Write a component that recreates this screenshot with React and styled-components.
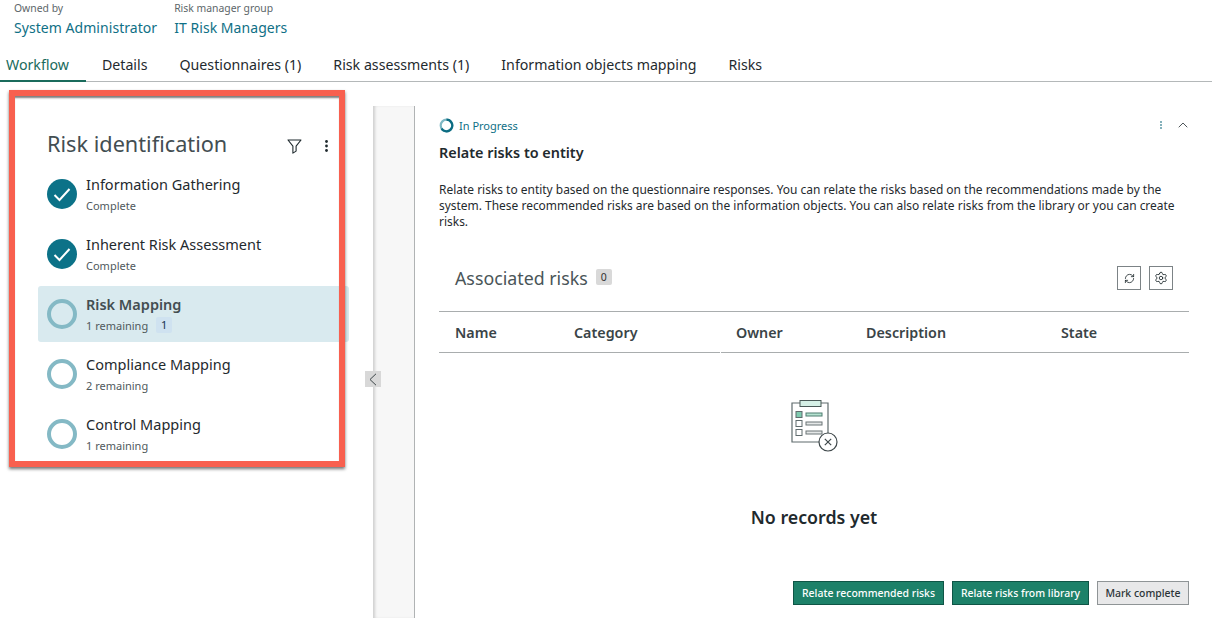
import React from 'react';
import styled, { createGlobalStyle } from 'styled-components';
import { RefreshCw, Settings, ChevronUp } from 'lucide-react';

const GlobalStyle = createGlobalStyle`
  html, body {
    margin: 0;
    height: 100%;
    background: #fff;
    overflow: hidden;
  }
  body {
    font-family: 'Noto Sans', 'Open Sans', sans-serif;
    color: #1f2a2e;
  }
  * { box-sizing: border-box; }
`;

const Page = styled.div`
  width: 1212px;
  height: 618px;
  display: flex;
  flex-direction: column;
`;

const Meta = styled.div`
  height: 50px;
  padding-left: 14px;
  display: flex;
  gap: 17px;
`;

const MetaItem = styled.div`
  display: flex;
  flex-direction: column;
`;

const MetaLabel = styled.span`
  font-size: 10.4px;
  line-height: 16px;
  color: #5c6669;
`;

const MetaValue = styled.span`
  font-size: 14px;
  line-height: 24px;
  letter-spacing: 0.05px;
  color: #0f7086;
`;

const Tabs = styled.div`
  height: 32px;
  display: flex;
  border-bottom: 1px solid #b4b8b9;
`;

const Tab = styled.div`
  height: 32px;
  padding: 0 16px;
  font-size: 14.2px;
  line-height: 29px;
  color: ${p => (p.$active ? '#1a6b5c' : '#1f2a2e')};
  border-bottom: 2px solid ${p => (p.$active ? '#1a6b5c' : 'transparent')};
  &:first-child { padding: 0 17px 0 6px; }
`;

const Body = styled.div`
  flex: 1;
  min-height: 0;
  display: grid;
  grid-template-columns: 373px 42px 1fr;
`;

const SidePanel = styled.section`
  position: relative;
  padding: 48px 24px 0 38px;
`;

const Callout = styled.div`
  position: absolute;
  left: 9px;
  top: 8px;
  width: 336px;
  height: 377px;
  border: 6px solid #f8604f;
  box-shadow: 0 2px 3px rgba(40, 40, 40, 0.65), inset 0 3px 2px -1px rgba(40, 40, 40, 0.6);
  pointer-events: none;
`;

const PanelHead = styled.div`
  height: 28px;
  margin-bottom: 8px;
  padding: 0 21px 0 9px;
  display: flex;
  align-items: center;
`;

const PanelTitle = styled.h2`
  margin: 0;
  flex: 1;
  font-size: 21.7px;
  line-height: 28px;
  font-weight: 400;
  color: #434e52;
`;

const PanelTools = styled.div`
  margin-top: 4px;
  display: flex;
  align-items: center;
  gap: 23px;
  color: #1f2a2e;
`;

const StepList = styled.div`
  display: flex;
  flex-direction: column;
  gap: 4px;
`;

const Step = styled.div`
  height: 56px;
  padding-left: 9px;
  display: flex;
  align-items: center;
  gap: 9px;
  border-radius: 3px;
  background: ${p => (p.$active ? '#d9eaef' : 'transparent')};
`;

const DoneMark = styled.span`
  width: 30px;
  height: 30px;
  flex: none;
  border-radius: 50%;
  background: #0c7288;
  display: flex;
  align-items: center;
  justify-content: center;
`;

const OpenMark = styled.span`
  width: 30px;
  height: 30px;
  flex: none;
  border-radius: 50%;
  border: 4px solid #84b9c5;
`;

const StepText = styled.div`
  display: flex;
  flex-direction: column;
`;

const StepName = styled.span`
  font-size: 14.5px;
  line-height: 22px;
  font-weight: ${p => (p.$active ? 600 : 400)};
  color: ${p => (p.$active ? '#434e52' : '#1f2a2e')};
`;

const StepSub = styled.span`
  display: flex;
  align-items: center;
  gap: 8px;
  height: 20px;
  font-size: 11px;
  color: #50595c;
`;

const Count = styled.span`
  min-width: 16px;
  height: 16px;
  background: #cfe2f0;
  border-radius: 2px;
  text-align: center;
  font-size: 11px;
  line-height: 16px;
  color: #16324f;
`;

const Gutter = styled.div`
  position: relative;
  margin-top: 24px;
  background: #f7f7f7;
  border-right: 1px solid #b0b3b4;
  box-shadow: inset 3px 0 3px -1px rgba(0, 0, 0, 0.16);
`;

const CollapseButton = styled.span`
  position: absolute;
  left: -8px;
  top: 265px;
  width: 16px;
  height: 16px;
  background: #d8d8d8;
  display: flex;
  align-items: center;
  justify-content: center;
`;

const Detail = styled.main`
  padding: 36px 23px 13px 24px;
  display: flex;
  flex-direction: column;
  min-width: 0;
`;

const StatusRow = styled.div`
  height: 14px;
  display: flex;
  align-items: center;
  gap: 5px;
  font-size: 11px;
  color: #0f7086;
`;

const StatusText = styled.span`
  flex: 1;
`;

const StatusTools = styled.div`
  margin-right: -2px;
  display: flex;
  align-items: center;
  gap: 13px;
  color: #1f2a2e;
`;

const DetailTitle = styled.h3`
  margin: 11px 0 0;
  font-size: 14.4px;
  line-height: 20px;
  font-weight: 600;
  color: #1f2a2e;
`;

const Description = styled.p`
  margin: 19px 0 0;
  font-size: 11.96px;
  line-height: 16px;
  color: #1f2a2e;
`;

const SectionHead = styled.div`
  margin-top: 36px;
  padding: 0 16px;
  height: 24px;
  display: flex;
  align-items: center;
`;

const SectionTitle = styled.h4`
  margin: 0;
  font-size: 17.8px;
  line-height: 24px;
  font-weight: 400;
  color: #4a5558;
`;

const ZeroBadge = styled.span`
  margin: -2px 0 0 8px;
  width: 16px;
  height: 16px;
  background: #d9d9d9;
  border-radius: 2px;
  text-align: center;
  font-size: 10.5px;
  line-height: 16px;
  color: #333;
`;

const SectionTools = styled.div`
  margin-left: auto;
  display: flex;
  gap: 8px;
`;

const ToolButton = styled.span`
  width: 24px;
  height: 24px;
  border: 1px solid #7c8386;
  color: #1f2a2e;
  display: flex;
  align-items: center;
  justify-content: center;
`;

const HeaderRow = styled.div`
  margin-top: 21px;
  height: 42px;
  display: grid;
  grid-template-columns: 119px 162px 130px 195px 1fr;
  border-top: 1px solid #a9adae;
`;

const HeaderCell = styled.div`
  padding: 2px 0 0 16px;
  font-size: 14.3px;
  line-height: 38px;
  font-weight: 600;
  color: #3a4447;
  border-bottom: 1px solid #a9adae;
  &:nth-child(3) {
    margin-left: 1px;
    padding-left: 15px;
  }
`;

const Empty = styled.div`
  margin-top: 42px;
  display: flex;
  flex-direction: column;
  align-items: center;
`;

const EmptyText = styled.div`
  margin-top: 50px;
  font-size: 17.8px;
  line-height: 24px;
  font-weight: 600;
  color: #1f2a2e;
`;

const Actions = styled.div`
  margin-top: auto;
  display: flex;
  justify-content: flex-end;
  gap: 8px;
`;

const ActionButton = styled.span`
  height: 24px;
  width: ${p => p.$w}px;
  text-align: center;
  font-size: 10.45px;
  line-height: 22px;
  font-weight: 500;
  color: ${p => (p.$secondary ? '#2b3437' : '#fff')};
  background: ${p => (p.$secondary ? '#e8e8e9' : '#1d8169')};
  border: 1px solid ${p => (p.$secondary ? '#8f9496' : '#0f5546')};
`;

const FilterIcon = () => (
  <svg width="15" height="15" viewBox="0 0 15 15" fill="none" stroke="#1f2a2e" strokeWidth="1.1" strokeLinejoin="round">
    <path d="M1 1h13L9.1 7.2v4.9l-3.2 2V7.2z" />
  </svg>
);

const KebabIcon = ({ color = '#1f2a2e', size = 3 }) => (
  <svg width={size} height={size * 4} viewBox="0 0 3 12" fill={color}>
    <circle cx="1.5" cy="1.5" r="1.4" />
    <circle cx="1.5" cy="6" r="1.4" />
    <circle cx="1.5" cy="10.5" r="1.4" />
  </svg>
);

const CheckIcon = () => (
  <svg width="18" height="15" viewBox="0 0 18 15" fill="none" stroke="#fff" strokeWidth="2">
    <path d="M1.5 8l5 5L16.5 2" />
  </svg>
);

const BackChevron = () => (
  <svg width="8" height="13" viewBox="0 0 8 13" fill="none" stroke="#3d4649" strokeWidth="1">
    <path d="M7 .8L1 6.5l6 5.7" />
  </svg>
);

const ProgressIcon = () => (
  <svg width="15" height="15" viewBox="0 0 15 15" fill="none" strokeWidth="2.2">
    <circle cx="7.5" cy="7.5" r="5.8" stroke="#7fb8c4" />
    <path d="M7.5 1.7a5.8 5.8 0 1 1-5 8.8" stroke="#0c6c82" />
  </svg>
);

const NoRecordsArt = () => (
  <svg width="60" height="60" viewBox="0 0 60 60" fill="none">
    <path d="M8 8h36v39H8z" fill="#fff" stroke="#5f6b6d" strokeWidth="1.2" />
    <rect x="16" y="5.5" width="21" height="6" fill="#d5f0e6" stroke="#4a5a58" strokeWidth="1" />
    <rect x="12" y="16.5" width="6" height="6" fill="#7fcbaf" stroke="#5f6b6d" />
    <rect x="12" y="25.5" width="6" height="6" stroke="#5f6b6d" />
    <rect x="12" y="34.5" width="6" height="6" stroke="#5f6b6d" />
    <rect x="22" y="18" width="16" height="3" fill="#b5e2d0" stroke="#4f7d70" />
    <rect x="22" y="27" width="16" height="3" fill="#e4e7e7" stroke="#6b7476" />
    <rect x="22" y="36" width="16" height="3" fill="#e4e7e7" stroke="#6b7476" />
    <circle cx="44" cy="47" r="9" fill="#fff" stroke="#3f484b" strokeWidth="1.2" />
    <path d="M40.8 43.8l6.4 6.4M47.2 43.8l-6.4 6.4" stroke="#3f484b" strokeWidth="1.2" />
  </svg>
);

const steps = [
  { name: 'Information Gathering', sub: 'Complete', done: true },
  { name: 'Inherent Risk Assessment', sub: 'Complete', done: true },
  { name: 'Risk Mapping', sub: '1 remaining', count: 1, active: true },
  { name: 'Compliance Mapping', sub: '2 remaining' },
  { name: 'Control Mapping', sub: '1 remaining' },
];

const tabs = [
  'Workflow',
  'Details',
  'Questionnaires (1)',
  'Risk assessments (1)',
  'Information objects mapping',
  'Risks',
];

const columns = ['Name', 'Category', 'Owner', 'Description', 'State'];

export default function App() {
  return (
    <Page>
      <GlobalStyle />
      <Meta>
        <MetaItem>
          <MetaLabel>Owned by</MetaLabel>
          <MetaValue>System Administrator</MetaValue>
        </MetaItem>
        <MetaItem>
          <MetaLabel>Risk manager group</MetaLabel>
          <MetaValue>IT Risk Managers</MetaValue>
        </MetaItem>
      </Meta>
      <Tabs>
        {tabs.map((tab, i) => (
          <Tab key={tab} $active={i === 0}>{tab}</Tab>
        ))}
      </Tabs>
      <Body>
        <SidePanel>
          <PanelHead>
            <PanelTitle>Risk identification</PanelTitle>
            <PanelTools>
              <FilterIcon />
              <KebabIcon />
            </PanelTools>
          </PanelHead>
          <StepList>
            {steps.map(step => (
              <Step key={step.name} $active={step.active}>
                {step.done ? <DoneMark><CheckIcon /></DoneMark> : <OpenMark />}
                <StepText>
                  <StepName $active={step.active}>{step.name}</StepName>
                  <StepSub>
                    {step.sub}
                    {step.count ? <Count>{step.count}</Count> : null}
                  </StepSub>
                </StepText>
              </Step>
            ))}
          </StepList>
          <Callout />
        </SidePanel>
        <Gutter>
          <CollapseButton><BackChevron /></CollapseButton>
        </Gutter>
        <Detail>
          <StatusRow>
            <ProgressIcon />
            <StatusText>In Progress</StatusText>
            <StatusTools>
              <KebabIcon color="#4f8f9e" size={2} />
              <ChevronUp size={16} strokeWidth={1.2} />
            </StatusTools>
          </StatusRow>
          <DetailTitle>Relate risks to entity</DetailTitle>
          <Description>
            Relate risks to entity based on the questionnaire responses. You can relate the risks based on the recommendations made by the system. These recommended risks are based on the information objects. You can also relate risks from the library or you can create risks.
          </Description>
          <SectionHead>
            <SectionTitle>Associated risks</SectionTitle>
            <ZeroBadge>0</ZeroBadge>
            <SectionTools>
              <ToolButton><RefreshCw size={11} strokeWidth={1.8} /></ToolButton>
              <ToolButton><Settings size={14} strokeWidth={1.5} /></ToolButton>
            </SectionTools>
          </SectionHead>
          <HeaderRow>
            {columns.map(col => <HeaderCell key={col}>{col}</HeaderCell>)}
          </HeaderRow>
          <Empty>
            <NoRecordsArt />
            <EmptyText>No records yet</EmptyText>
          </Empty>
          <Actions>
            <ActionButton $w={151}>Relate recommended risks</ActionButton>
            <ActionButton $w={137}>Relate risks from library</ActionButton>
            <ActionButton $w={92} $secondary>Mark complete</ActionButton>
          </Actions>
        </Detail>
      </Body>
    </Page>
  );
}
